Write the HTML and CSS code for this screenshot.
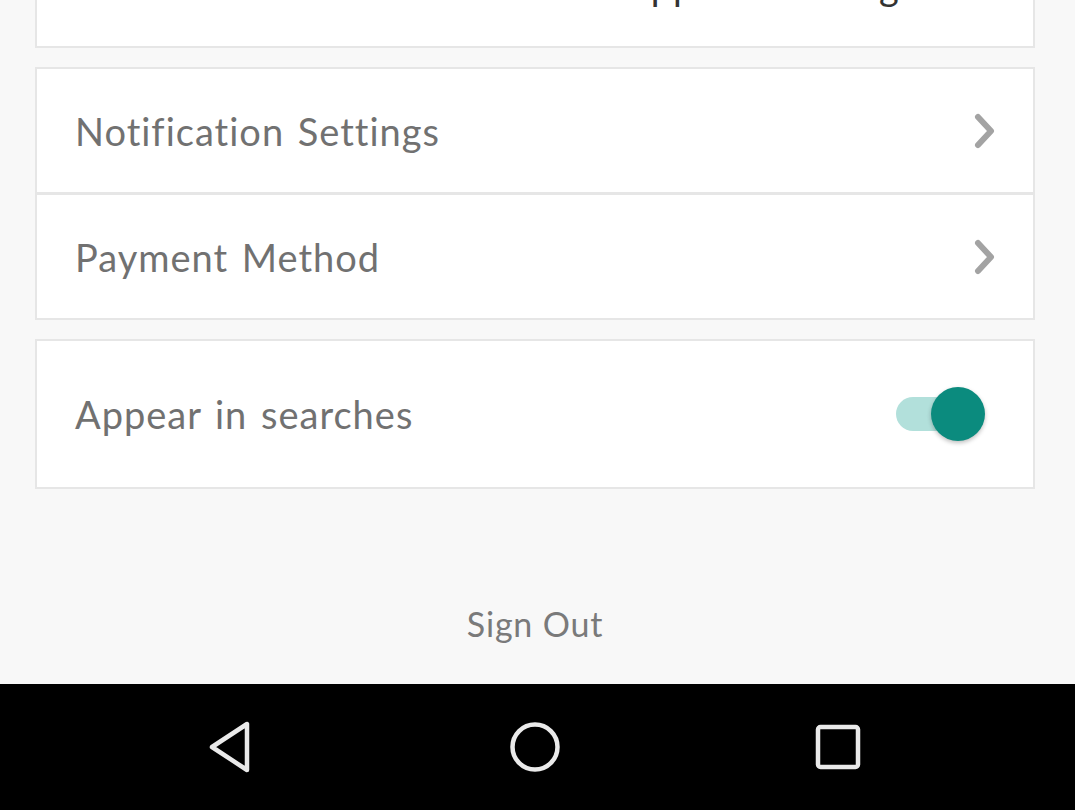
FILE: index.html
```html
<!DOCTYPE html>
<html>
<head>
<meta charset="utf-8">
<link rel="stylesheet" href="styles.css">
</head>
<body>
<div class="screen">
  <div class="content">
    <div class="card row">
      <span class="label muted">Title</span>
      <span class="value">Application Engineer</span>
    </div>
    <div class="group">
      <div class="card row link">
        <span class="label">Notification Settings</span>
        <svg class="chev" width="24" height="40" viewBox="0 0 24 40"><path d="M5 6 L18 20 L5 34" fill="none" stroke="#a3a3a3" stroke-width="6" stroke-linecap="round" stroke-linejoin="round"/></svg>
      </div>
      <div class="card row link">
        <span class="label">Payment Method</span>
        <svg class="chev" width="24" height="40" viewBox="0 0 24 40"><path d="M5 6 L18 20 L5 34" fill="none" stroke="#a3a3a3" stroke-width="6" stroke-linecap="round" stroke-linejoin="round"/></svg>
      </div>
    </div>
    <div class="card row tall">
      <span class="label">Appear in searches</span>
      <div class="toggle"><div class="track"></div><div class="knob"></div></div>
    </div>
    <div class="signout">Sign Out</div>
  </div>
  <div class="navbar">
    <svg width="50" height="56" viewBox="0 0 50 56"><path d="M41 5 L41 51 L6 28 Z" fill="none" stroke="#eaeaea" stroke-width="4.5" stroke-linejoin="round"/></svg>
    <svg width="54" height="54" viewBox="0 0 54 54"><circle cx="27" cy="27" r="22.5" fill="none" stroke="#eaeaea" stroke-width="4.5"/></svg>
    <svg width="50" height="50" viewBox="0 0 50 50"><rect x="5" y="5" width="40" height="40" rx="2.5" fill="none" stroke="#eaeaea" stroke-width="4.5"/></svg>
  </div>
</div>
</body>
</html>
```
FILE: styles.css
```css
* { box-sizing: border-box; }
html, body { margin: 0; padding: 0; }
body {
  background: #f8f8f8;
  font-family: "Lato", "Open Sans", sans-serif;
}
.screen {
  width: 1075px;
  height: 810px;
  display: flex;
  flex-direction: column;
  overflow: hidden;
}
.content {
  flex: 1;
  display: flex;
  flex-direction: column;
  padding: 0 40px 0 35px;
  margin-top: -79px;
}
.card {
  background: #fff;
  border: 2px solid #e6e6e6;
}
.row {
  height: 127px;
  display: flex;
  align-items: center;
  justify-content: space-between;
  padding: 0 38px 0 38px;
}
.group { margin-top: 19px; display: flex; flex-direction: column; }
.group .card + .card { margin-top: -1px; }
.tall { height: 150px; margin-top: 19px; padding-right: 48px; }
.label {
  font-size: 38px;
  color: #717171;
  letter-spacing: 1px;
  word-spacing: 3px;
}
.muted { color: #9a9a9a; }
.value {
  font-size: 38px;
  color: #333;
  letter-spacing: 1px;
  margin-right: 6px;
}
.link { padding-right: 36px; }
.chev { display: block; }
.toggle {
  position: relative;
  width: 89px;
  height: 54px;
}
.track {
  position: absolute;
  left: 0;
  top: 10px;
  width: 76px;
  height: 34px;
  border-radius: 17px;
  background: #b2e0db;
}
.knob {
  position: absolute;
  right: 0;
  top: 0;
  width: 54px;
  height: 54px;
  border-radius: 50%;
  background: #0b8b7e;
  box-shadow: 0 2px 4px rgba(0,0,0,0.25);
}
.signout {
  margin-top: 114px;
  text-align: center;
  font-size: 34px;
  color: #7a7a7a;
  letter-spacing: 0.8px;
}
.navbar {
  height: 126px;
  background: #000;
  display: flex;
  align-items: center;
  justify-content: space-between;
  padding: 0 212px 0 206px;
}
.navbar svg { display: block; }
```
